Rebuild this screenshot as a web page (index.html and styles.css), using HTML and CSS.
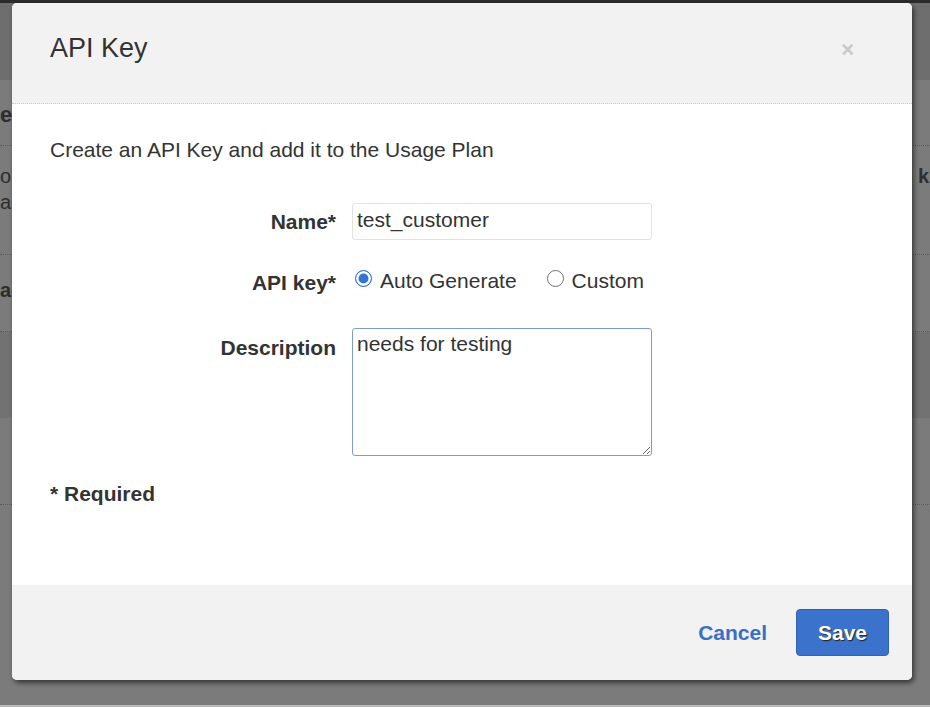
FILE: index.html
```html
<!DOCTYPE html>
<html lang="en">
<head>
<meta charset="utf-8">
<title>API Key</title>
<link rel="stylesheet" href="styles.css">
</head>
<body>
<div class="page">
  <div class="topbar"></div>
  <div class="bg-band"></div>
  <div class="bg-row bg-head"><span>e</span></div>
  <div class="bg-row bg-line1"><span>o</span><span class="bg-k">k</span></div>
  <div class="bg-row bg-line2"><span>ac</span></div>
  <div class="bg-row bg-sect"><span>ag</span></div>
  <div class="bg-tex"></div>
  <div class="bg-rest"></div>
</div>

<div class="modal">
  <div class="modal-header">
    <h1 class="modal-title">API Key</h1>
    <span class="close">&times;</span>
  </div>
  <div class="modal-body">
    <p class="intro">Create an API Key and add it to the Usage Plan</p>
    <div class="form">
      <div class="row row-name">
        <label class="label">Name*</label>
        <div class="input">test_customer</div>
      </div>
      <div class="row row-radio">
        <label class="label">API key*</label>
        <div class="radios">
          <span class="radio-opt"><span class="radio checked"></span>Auto Generate</span>
          <span class="radio-opt"><span class="radio"></span>Custom</span>
        </div>
      </div>
      <div class="row row-desc">
        <label class="label">Description</label>
        <textarea class="textarea" readonly>needs for testing</textarea>
      </div>
    </div>
    <p class="required">* Required</p>
  </div>
  <div class="modal-footer">
    <span class="cancel">Cancel</span>
    <span class="save">Save</span>
  </div>
</div>
</body>
</html>
```

FILE: styles.css
```css
html, body {
  margin: 0;
  padding: 0;
}
body {
  width: 930px;
  height: 707px;
  overflow: hidden;
  background: #7b7b7b;
  font-family: "Liberation Sans", Arial, Helvetica, sans-serif;
  position: relative;
}
.page {
  height: 707px;
  display: flex;
  flex-direction: column;
  border-bottom: 2px solid #b8b8b8;
  box-sizing: border-box;
  color: #2e2e2e;
}
.topbar {
  height: 3px;
  background: #2b2b2b;
}
.bg-band {
  height: 77px;
  background: #6e6e6e;
}
.bg-row {
  display: flex;
  justify-content: space-between;
  padding: 0 1px 0 0;
}
.bg-head {
  height: 66px;
  font-size: 22px;
  font-weight: bold;
  line-height: 70px;
  border-bottom: 1px dotted #5a5a5a;
  box-sizing: border-box;
}
.bg-line1 {
  padding-top: 18px;
  font-size: 20px;
  line-height: 24px;
}
.bg-k {
  font-weight: bold;
}
.bg-line2 {
  font-size: 20px;
  line-height: 28px;
  height: 66px;
  border-bottom: 1px dotted #5a5a5a;
}
.bg-sect {
  height: 77px;
  line-height: 70px;
  font-size: 20px;
  font-weight: bold;
  border-bottom: 1px dotted #5a5a5a;
  box-sizing: border-box;
}
.bg-tex {
  height: 86px;
  background: #727272;
}
.bg-rest {
  height: 86px;
  border-bottom: 1px dotted #5a5a5a;
}

.modal {
  position: absolute;
  left: 12px;
  top: 3px;
  width: 900px;
  height: 677px;
  background: #fff;
  border-radius: 5px;
  box-shadow: 2px 3px 5px rgba(0, 0, 0, 0.55);
  display: flex;
  flex-direction: column;
  overflow: hidden;
  color: #333;
}
.modal-header {
  height: 101px;
  box-sizing: border-box;
  background: #f2f2f2;
  border-bottom: 1px dotted #c8c8c8;
  display: flex;
  justify-content: space-between;
  align-items: flex-start;
  padding: 29px 58px 0 38px;
}
.modal-title {
  margin: 0;
  font-size: 27px;
  font-weight: normal;
  line-height: 32px;
  color: #333;
}
.close {
  font-size: 22px;
  font-weight: bold;
  color: #c9c9c9;
  line-height: 28px;
  margin-top: 4px;
}
.modal-body {
  flex: 1;
  padding: 34px 38px 0 38px;
}
.intro {
  margin: 0;
  font-size: 21px;
  line-height: 24px;
}
.form {
  margin-top: 41px;
  display: flex;
  flex-direction: column;
}
.row {
  display: flex;
  align-items: flex-start;
  gap: 16px;
}
.label {
  width: 286px;
  text-align: right;
  font-weight: bold;
  font-size: 21px;
  line-height: 24px;
}
.row-name .label {
  padding-top: 7px;
}
.input {
  width: 300px;
  height: 37px;
  box-sizing: border-box;
  border: 1px solid #e2e2e2;
  border-radius: 3px;
  font-size: 21px;
  line-height: 24px;
  padding: 4px 4px;
}
.row-radio {
  margin-top: 28px;
}
.row-radio .label {
  padding-top: 3px;
}
.radios {
  display: flex;
  gap: 27px;
  font-size: 21px;
  line-height: 24px;
  padding-top: 1px;
}
.radio-opt {
  display: flex;
  align-items: center;
  gap: 8px;
}
.radio {
  width: 17px;
  height: 17px;
  box-sizing: border-box;
  border-radius: 50%;
  border: 1px solid #6f6f6f;
  background: #fff;
  margin-left: 3px;
  margin-top: -5px;
}
.radio.checked {
  border: 1.5px solid #3574d4;
  background: #3574d4;
  box-shadow: inset 0 0 0 2.5px #fff;
}
.row-desc {
  margin-top: 33px;
}
.row-desc .label {
  padding-top: 8px;
}
.textarea {
  width: 300px;
  height: 128px;
  box-sizing: border-box;
  border: 1px solid #7f9cd2;
  border-radius: 3px;
  font-family: "Liberation Sans", Arial, Helvetica, sans-serif;
  font-size: 21px;
  line-height: 24px;
  color: #333;
  padding: 3px 4px;
  margin: 0;
  outline: none;
  resize: both;
  display: block;
}
.required {
  margin: 26px 0 0 0;
  font-size: 21px;
  font-weight: bold;
  line-height: 24px;
}
.modal-footer {
  height: 95px;
  box-sizing: border-box;
  background: #f2f2f2;
  display: flex;
  justify-content: flex-end;
  align-items: center;
  gap: 29px;
  padding-right: 23px;
}
.cancel {
  font-size: 21px;
  font-weight: bold;
  color: #3a6fc6;
}
.save {
  width: 93px;
  height: 47px;
  box-sizing: border-box;
  background: #3b73cc;
  border: 1px solid #2f62b3;
  border-radius: 4px;
  color: #fff;
  font-size: 21px;
  font-weight: bold;
  display: flex;
  align-items: center;
  justify-content: center;
  text-shadow: 1px 1px 1px #222;
}
```
